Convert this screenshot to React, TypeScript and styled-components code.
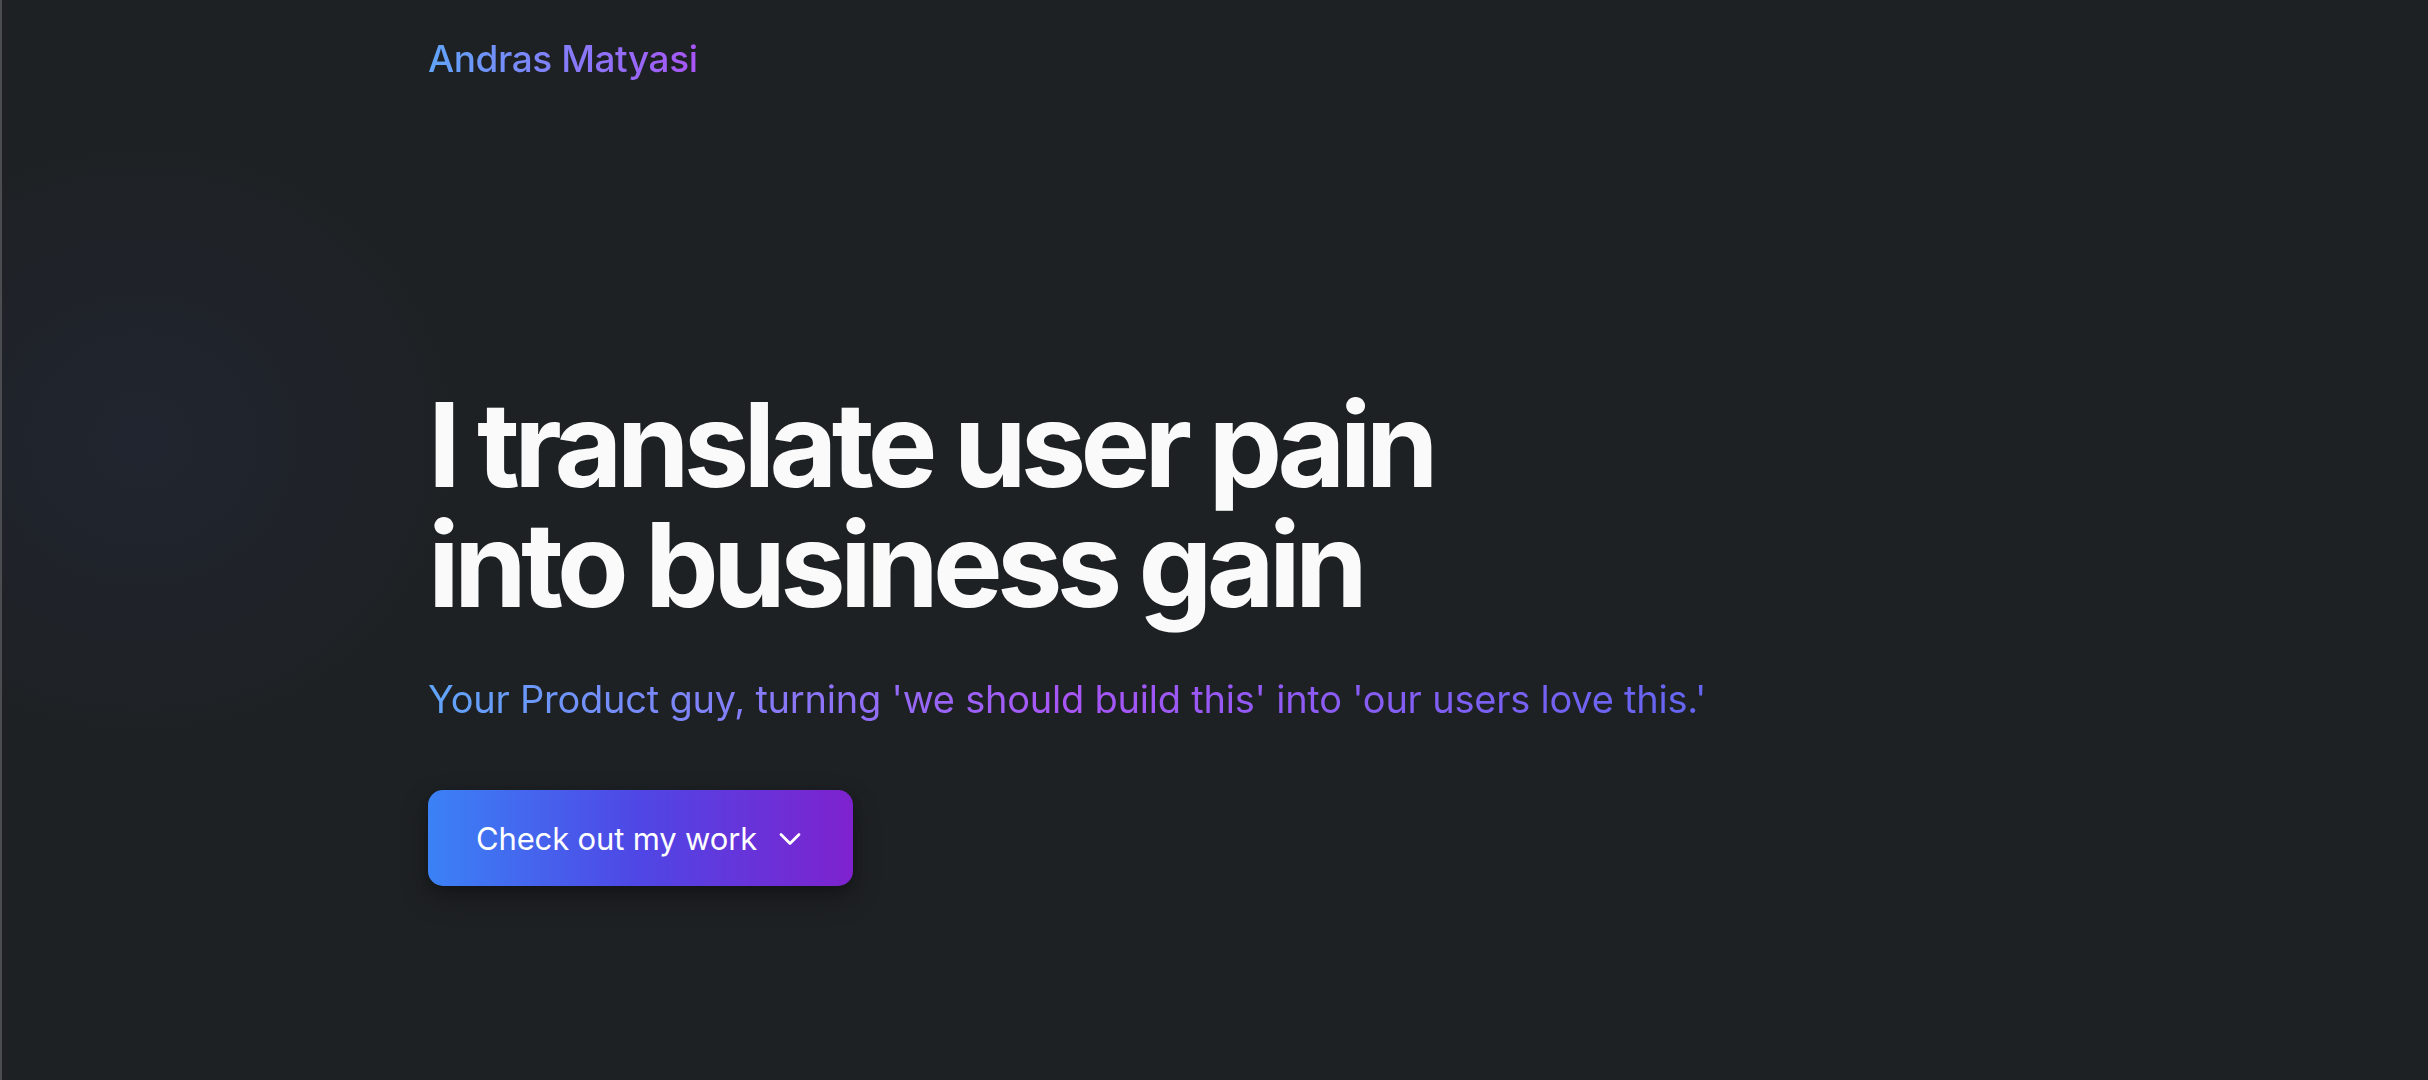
import React from "react";
import styled, { createGlobalStyle } from "styled-components";

const GlobalStyle = createGlobalStyle`
  html, body {
    margin: 0;
    padding: 0;
    background: #1e2124;
  }
  body {
    font-family: Inter, "Noto Sans", "Liberation Sans", sans-serif;
    -webkit-font-smoothing: antialiased;
  }
  * { box-sizing: border-box; }
`;

const Page = styled.div`
  min-height: 100vh;
  border-left: 2px solid #4a4c4f;
  background:
    radial-gradient(ellipse 320px 300px at 140px 440px, rgba(40, 48, 80, 0.25), rgba(30, 33, 36, 0) 100%),
    #1e2124;
`;

const Container = styled.div`
  width: 1574px;
  margin: 0 auto;
  display: flex;
  flex-direction: column;
`;

const Header = styled.header`
  display: flex;
  align-items: center;
  padding-top: 31px;
`;

const GradientText = styled.span<{ $from: string; $via?: string; $to: string }>`
  background: linear-gradient(
    to right,
    ${(p) => p.$from},
    ${(p) => (p.$via ? p.$via + "," : "")} ${(p) => p.$to}
  );
  -webkit-background-clip: text;
  background-clip: text;
  color: transparent;
`;

const Logo = styled.a`
  font-size: 37px;
  line-height: 56px;
  font-weight: 500;
  letter-spacing: -0.012em;
  text-decoration: none;
`;

const Hero = styled.section`
  display: flex;
  flex-direction: column;
  align-items: flex-start;
  padding-top: 298px;
`;

const Title = styled.h1`
  margin: 0;
  font-size: 117px;
  line-height: 120px;
  font-weight: 700;
  letter-spacing: -0.049em;
  color: #fafafa;
`;

const Subtitle = styled.p`
  margin: 46px 0 0;
  font-size: 38px;
  line-height: 57px;
  font-weight: 400;
  letter-spacing: -0.006em;
`;

const CtaButton = styled.button`
  margin-top: 62px;
  height: 96px;
  padding: 0 48px;
  display: inline-flex;
  align-items: center;
  gap: 18px;
  border: none;
  border-radius: 15px;
  background: linear-gradient(to right, #3b82f6, #4f46e5 50%, #7e22ce);
  box-shadow: 0 12px 28px rgba(0, 0, 0, 0.28), 0 4px 10px rgba(0, 0, 0, 0.18);
  color: #ffffff;
  font-family: inherit;
  font-size: 31px;
  font-weight: 400;
  letter-spacing: -0.005em;
  cursor: pointer;
`;

const Chevron = () => (
  <svg width="30" height="30" viewBox="0 0 30 30" fill="none">
    <path d="M6 11.5 L15 20.5 L24 11.5" stroke="#ffffff" strokeWidth="2.8" strokeLinecap="round" strokeLinejoin="round" />
  </svg>
);

export default function App() {
  return (
    <>
      <GlobalStyle />
      <Page>
        <Container>
          <Header>
            <Logo href="#">
              <GradientText $from="#60a5fa" $to="#a855f7">Andras Matyasi</GradientText>
            </Logo>
          </Header>
          <Hero>
            <Title>
              I translate user pain
              <br />
              into business gain
            </Title>
            <Subtitle>
              <GradientText $from="#60a5fa" $via="#a855f7" $to="#6366f1">
                Your Product guy, turning 'we should build this' into 'our users love this.'
              </GradientText>
            </Subtitle>
            <CtaButton>
              Check out my work
              <Chevron />
            </CtaButton>
          </Hero>
        </Container>
      </Page>
    </>
  );
}
